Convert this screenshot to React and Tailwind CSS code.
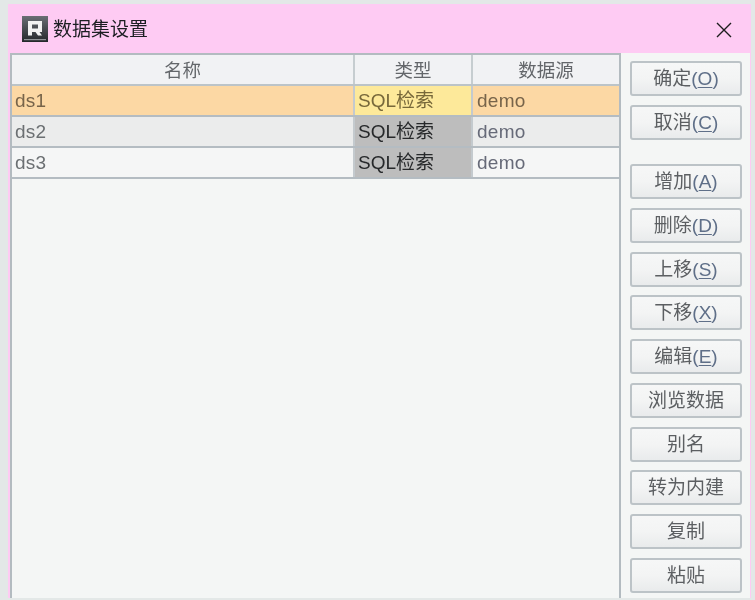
const font = { fontFamily: '"Liberation Sans", "Noto Sans CJK SC", sans-serif' };

function Logo() {
  return (
    <svg width="26" height="26" viewBox="0 0 26 26" className="shrink-0">
      <defs>
        <linearGradient id="lg" x1="0" y1="0" x2="0" y2="1">
          <stop offset="0" stopColor="#6a6e74" />
          <stop offset="1" stopColor="#24272b" />
        </linearGradient>
      </defs>
      <rect width="26" height="26" fill="url(#lg)" />
      <path d="M6 5h14v11h-2.5l2.5 3.5h-4l-2.5-3.5H10v3.5H6z M10 8.5v4h6v-4z" fill="#f2f2f2" fillRule="evenodd" />
      <rect x="2" y="23" width="22" height="1.2" fill="#8f9296" />
    </svg>
  );
}

function Btn({ label, m }) {
  return (
    <button className="w-[112px] h-[35px] shrink-0 rounded-[3px] border-2 border-[#bcc3c7] bg-gradient-to-b from-[#f6f7f7] via-[#f3f4f4] to-[#e9ebec] text-[19px] leading-none text-[#5c5f62] flex items-center justify-center">
      {label}
      {m && (
        <span className="text-[#5f6f88]">
          (<span className="underline underline-offset-2">{m}</span>)
        </span>
      )}
    </button>
  );
}

const rows = [
  { n: "ds1", row: "bg-[#fcd8a4]", name: "text-[#77644a]", type: "bg-[#fde99a] text-[#77683a]", src: "text-[#77644a]" },
  { n: "ds2", row: "bg-[#ebecec]", name: "text-[#6b6f72]", type: "bg-[#bdbdbd] text-[#26282a]", src: "text-[#666a78]" },
  { n: "ds3", row: "bg-[#f5f6f6]", name: "text-[#6b6f72]", type: "bg-[#bdbdbd] text-[#26282a]", src: "text-[#666a78]" },
];

export default function App() {
  return (
    <div style={font} className="w-[755px] h-[600px] overflow-hidden bg-[#e3e8e7] pl-[8px] pt-[4px] pr-[4px] pb-[2px] flex blur-[0.4px]">
      <div className="flex-1 min-w-0 flex flex-col bg-[#fecbf3] pl-[2px] pr-[1px]">
        <div className="h-[49px] shrink-0 flex items-center pl-[12px] pr-[18px]">
          <Logo />
          <span className="ml-[5px] pt-[2px] text-[19px] leading-none text-[#1c1e22]">数据集设置</span>
          <svg width="16" height="16" viewBox="0 0 16 16" className="ml-auto mt-[2px]">
            <path d="M1 1l14 14M15 1L1 15" stroke="#1d1d1d" strokeWidth="1.4" fill="none" />
          </svg>
        </div>
        <div className="flex-1 min-h-0 flex bg-[#f4f6f5]">
          <div className="w-[611px] shrink-0 border-l-[2px] border-r-[2px] border-t-[2px] border-[#b3bbc0]">
            <div className="flex h-[31px] bg-[#f1f2f4] text-[18.5px] text-[#63666a] leading-none border-b-[2px] border-[#bcc4c8]">
              <div className="w-[343px] pt-[3px] flex items-center justify-center border-r-[2px] border-[#c6cdd0]">名称</div>
              <div className="w-[118px] pt-[3px] flex items-center justify-center border-r-[2px] border-[#c6cdd0]">类型</div>
              <div className="flex-1 pt-[3px] flex items-center justify-center">数据源</div>
            </div>
            {rows.map((r) => (
              <div key={r.n} className={`flex h-[31px] text-[19px] tracking-[0.25px] leading-none border-b-[2px] border-[#b4bcc2] ${r.row}`}>
                <div className={`w-[341px] flex items-center pl-[3px] pb-[1px] ${r.name}`}>{r.n}</div>
                <div className={`w-[120px] flex items-center pl-[3px] tracking-normal border-x-[2px] border-[#c4cace] ${r.type}`}>SQL检索</div>
                <div className={`flex-1 flex items-center pl-[4px] pb-[1px] ${r.src}`}>demo</div>
              </div>
            ))}
          </div>
          <div className="flex-1 min-w-0 flex flex-col pl-[9px] pt-[8px]">
            <div className="flex flex-col gap-[9px]">
              <Btn label="确定" m="O" />
              <Btn label="取消" m="C" />
            </div>
            <div className="flex flex-col gap-[8.75px] mt-[24px]">
              <Btn label="增加" m="A" />
              <Btn label="删除" m="D" />
              <Btn label="上移" m="S" />
              <Btn label="下移" m="X" />
              <Btn label="编辑" m="E" />
              <Btn label="浏览数据" />
              <Btn label="别名" />
              <Btn label="转为内建" />
              <Btn label="复制" />
              <Btn label="粘贴" />
            </div>
          </div>
        </div>
      </div>
    </div>
  );
}
